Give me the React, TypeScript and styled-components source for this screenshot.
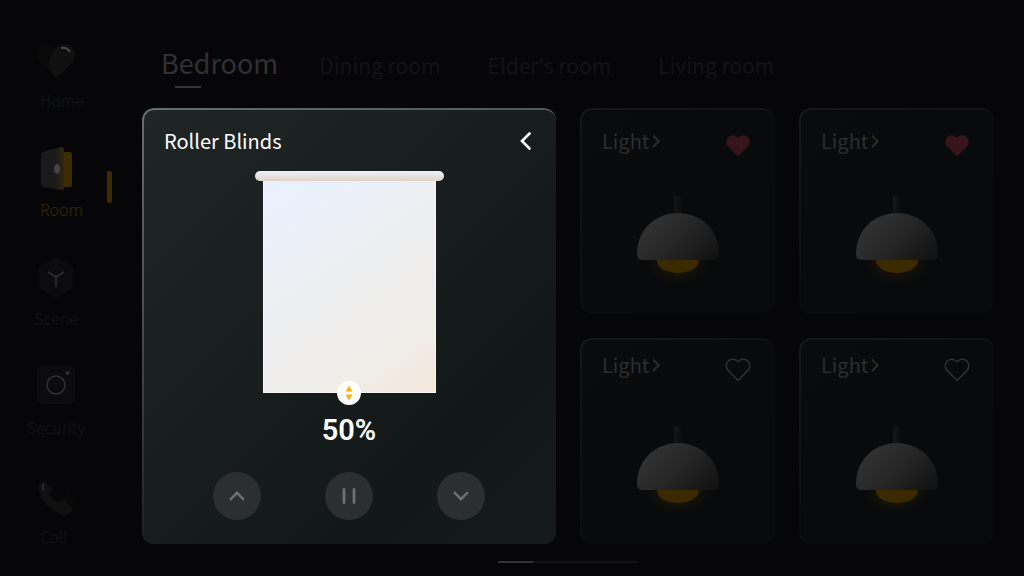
import React from 'react';
import styled, { createGlobalStyle } from 'styled-components';

const GlobalStyle = createGlobalStyle`
  *, *::before, *::after { box-sizing: border-box; }
  body {
    margin: 0;
    background: #060608;
    font-family: "Noto Sans CJK SC", "Noto Sans", sans-serif;
    font-weight: 400;
  }
  button { font: inherit; color: inherit; background: none; border: 0; padding: 0; cursor: pointer; }
  a { color: inherit; text-decoration: none; }
  h2, h3, p { margin: 0; font-weight: 400; }
  svg { display: block; }
`;

const Page = styled.div`
  display: flex;
  min-height: 100vh;
  background: #060608;
`;

const Sidebar = styled.nav`
  flex: 0 0 142px;
  display: flex;
  flex-direction: column;
  gap: 34px;
  padding: 37px 0 16px 40px;
`;

const NavItem = styled.a<{ $active?: boolean; $start?: boolean }>`
  position: relative;
  display: flex;
  flex-direction: column;
  align-items: ${(p) => (p.$start ? 'flex-start' : 'center')};
  gap: 6px;
  width: 32px;
  font-size: 16px;
  line-height: 24px;
  font-weight: 300;
  white-space: nowrap;
  color: ${(p) => (p.$active ? '#3b2a02' : '#151516')};
`;

const NavIcon = styled.svg`
  width: 40px;
  height: 45px;
  margin: 0 -4px;
  flex: none;
`;

const ActiveMark = styled.span`
  position: absolute;
  left: 67px;
  top: 25px;
  width: 5px;
  height: 32px;
  border-radius: 2px;
  background: #3d2b02;
`;

const Main = styled.main`
  flex: 1;
  min-width: 0;
  padding: 43px 30px 12px 0;
`;

const Tabs = styled.div`
  display: flex;
  align-items: baseline;
  gap: 47px;
  height: 65px;
  padding-left: 19px;
  white-space: nowrap;
`;

const Tab = styled.button<{ $active?: boolean }>`
  position: relative;
  margin-right: ${(p) => (p.$active ? -6 : 0)}px;
  font-size: ${(p) => (p.$active ? 27 : 21)}px;
  line-height: 40px;
  color: ${(p) => (p.$active ? '#303031' : '#131314')};
  &::after {
    content: '';
    display: ${(p) => (p.$active ? 'block' : 'none')};
    position: absolute;
    left: 14px;
    top: 43px;
    width: 26px;
    height: 2px;
    background: #343435;
  }
`;

const Board = styled.div`
  display: grid;
  grid-template-columns: repeat(4, minmax(0, 1fr));
  grid-auto-rows: minmax(206px, auto);
  gap: 24px;
`;

const Panel = styled.section`
  position: relative;
  border-radius: 12px;
  &::before {
    content: '';
    position: absolute;
    inset: 0;
    border-radius: inherit;
    padding: 2px 0 0 2px;
    pointer-events: none;
    mask: linear-gradient(#000 0 0) content-box exclude, linear-gradient(#000 0 0);
  }
`;

const BlindsPanel = styled(Panel)`
  grid-column: span 2;
  grid-row: span 2;
  display: flex;
  flex-direction: column;
  align-items: center;
  padding: 19px 22px 24px;
  background: linear-gradient(135deg, #202626 0%, #181d1d 45%, #121818 75%, #151b1b 100%);
  color: #fff;
  &::before {
    background: linear-gradient(160deg, #6a6d6d 0%, #4a4e4e 35%, #1b2020 75%);
  }
`;

const PanelHeader = styled.header`
  display: flex;
  align-items: center;
  justify-content: space-between;
  align-self: stretch;
  height: 28px;
  margin-bottom: 16px;
`;

const PanelTitle = styled.h2`
  font-size: 20px;
  line-height: 28px;
`;

const BackButton = styled.button`
  width: 16px;
  height: 24px;
`;

const Rod = styled.div`
  width: 189px;
  height: 10px;
  border-radius: 5px;
  background: linear-gradient(#edf1fa, #e6e3e2 50%, #dfd2c5);
`;

const Sheet = styled.div`
  position: relative;
  width: 173px;
  height: 212px;
  border: 1px solid #f7f6f3;
  border-top: 0;
  background: linear-gradient(145deg, #e8f1ff 0%, #eeeeef 50%, #f0ede9 75%, #f4e8dc 100%);
`;

const Handle = styled.button`
  position: absolute;
  left: calc(50% - 12px);
  bottom: -13px;
  width: 24px;
  height: 24px;
  border-radius: 50%;
  background: #fff;
`;

const Percent = styled.p`
  margin: 19px 0 24px;
  font-family: Roboto, sans-serif;
  font-size: 29px;
  line-height: 36px;
  font-weight: 600;
`;

const Controls = styled.div`
  display: flex;
  gap: 64px;
`;

const RoundButton = styled.button`
  display: grid;
  place-items: center;
  width: 48px;
  height: 48px;
  border-radius: 50%;
  background: #2b2f30;
`;

const LightCard = styled(Panel)`
  display: flex;
  flex-direction: column;
  align-items: center;
  background: linear-gradient(135deg, #090b0c, #07090a);
  &::before {
    background: linear-gradient(150deg, #171819 0%, #101112 40%, #08090a 80%);
  }
`;

const CardHeader = styled.header<{ $raised: boolean }>`
  display: flex;
  justify-content: space-between;
  align-self: stretch;
  height: 88px;
  padding: ${(p) => (p.$raised ? 13 : 19)}px 24px 0 22px;
`;

const CardTitle = styled.button`
  display: flex;
  align-items: center;
  gap: 3px;
  height: 28px;
  font-size: 20px;
  line-height: 28px;
  color: #2d2d2e;
`;

const LikeButton = styled.button`
  height: 36px;
`;

const Pager = styled.div`
  width: 140px;
  height: 2px;
  margin: 17px auto 0;
  background: #121210;
`;

const PagerThumb = styled.div`
  width: 25%;
  height: 100%;
  background: #323233;
`;

const HomeIcon = () => (
  <NavIcon viewBox="0 -2 40 45" aria-hidden="true">
    <path d="M19 37C11 30 1 25 1 15C1 8 6 5 11 5C16 5 19 9 20 12Z" fill="#090908" />
    <path d="M14 19C16 12 21 5 28 5C34 5 39 9 39 15C39 22 33 27 23 37Q20 39 17 36C13 32 12 26 14 19Z" fill="#101011" />
    <path d="M25 9Q31 8 34 13" fill="none" stroke="#474748" strokeWidth="2" />
  </NavIcon>
);

const RoomIcon = () => (
  <NavIcon viewBox="0 0 40 45" aria-hidden="true">
    <defs>
      <linearGradient id="door" x1="0" x2="1">
        <stop offset="0" stopColor="#1a1a1b" />
        <stop offset="0.6" stopColor="#1a1a1b" />
        <stop offset="1" stopColor="#30260c" />
      </linearGradient>
    </defs>
    <rect x="22" y="6" width="14" height="35" rx="2" fill="#3d2b02" />
    <path d="M7 6L25 1Q28 1 28 4V42Q28 45 25 44L7 41Q5 40 5 38V9Q5 7 7 6Z" fill="url(#door)" />
    <ellipse cx="21" cy="23" rx="3" ry="5" fill="#444445" />
  </NavIcon>
);

const SceneIcon = () => (
  <NavIcon viewBox="0 0 40 45" aria-hidden="true">
    <path d="M18 3Q20 2 22 3L35 11Q37 12 37 14V31Q37 33 35 34L22 42Q20 43 18 42L5 34Q3 33 3 31V14Q3 12 5 11Z" fill="#0c0c0e" />
    <path d="M12 17L20 22L28 17M20 22V32" fill="none" stroke="#303031" strokeWidth="1.5" />
  </NavIcon>
);

const SecurityIcon = () => (
  <NavIcon viewBox="0 2 40 45" aria-hidden="true">
    <rect x="1" y="4" width="38" height="38" rx="5" fill="#0c0c0e" />
    <circle cx="20" cy="23" r="9" fill="none" stroke="#303031" strokeWidth="1.5" />
    <circle cx="31.5" cy="11" r="2" fill="#303031" />
  </NavIcon>
);

const CallIcon = () => (
  <NavIcon viewBox="0 -1 40 45" aria-hidden="true">
    <path d="M22 27L31 19L37 25V33Z" fill="#090907" />
    <path d="M3 12Q4 7 8 6Q11 9 14 12L17 15L13 21Q17 26 22 29L28 26L36 33Q37 36 34 39Q30 42 25 40C12 35 3 25 3 12Z" fill="#101011" />
    <path d="M8 10Q5 13 8 16" fill="none" stroke="#343435" strokeWidth="1.5" />
  </NavIcon>
);

const HeartIcon = ({ filled }: { filled: boolean }) => (
  <svg width="26" height="36" viewBox="0 0 26 36" aria-hidden="true">
    <path
      d="M13 29.5L3.2 19.6A6.3 6.3 0 0 1 12.3 10.2L13 10.8L13.7 10.2A6.3 6.3 0 0 1 22.8 19.6Z"
      fill={filled ? '#37141a' : 'none'}
      stroke={filled ? 'none' : '#303031'}
      strokeWidth="1.5"
      strokeLinejoin="round"
    />
  </svg>
);

const Lamp = ({ id }: { id: string }) => (
  <svg width="106" height="104" viewBox="0 0 106 104" aria-hidden="true">
    <defs>
      <linearGradient id={`${id}-shade`} x1="0.1" y1="0.3" x2="1" y2="0.8">
        <stop offset="0" stopColor="#313132" />
        <stop offset="0.45" stopColor="#262627" />
        <stop offset="1" stopColor="#131314" />
      </linearGradient>
      <linearGradient id={`${id}-stem`} x1="0" x2="1">
        <stop offset="0" stopColor="#161617" />
        <stop offset="1" stopColor="#0a0b0c" />
      </linearGradient>
      <radialGradient id={`${id}-glow`}>
        <stop offset="0.3" stopColor="#3d2b02" stopOpacity="0.3" />
        <stop offset="1" stopColor="#3d2b02" stopOpacity="0" />
      </radialGradient>
    </defs>
    <ellipse cx="53" cy="67" rx="34" ry="22" fill={`url(#${id}-glow)`} />
    <ellipse cx="53" cy="65" rx="21" ry="12" fill="#3b2900" />
    <rect x="49" y="0" width="8" height="18" fill={`url(#${id}-stem)`} />
    <path d="M12 58C12 33 31 17 53 17S94 33 94 58Q94 64 88 64H18Q12 64 12 58Z" fill={`url(#${id}-shade)`} />
  </svg>
);

const NAV = [
  { label: 'Home', icon: HomeIcon, start: true },
  { label: 'Room', icon: RoomIcon, start: true, active: true },
  { label: 'Scene', icon: SceneIcon },
  { label: 'Security', icon: SecurityIcon },
  { label: 'Call', icon: CallIcon, start: true },
];

const TABS = ['Bedroom', 'Dining room', "Elder's room", 'Living room'];

const LIGHTS = [
  { id: 'light-1', liked: true },
  { id: 'light-2', liked: true },
  { id: 'light-3', liked: false },
  { id: 'light-4', liked: false },
];

export default function App() {
  return (
    <>
      <GlobalStyle />
      <Page>
        <Sidebar aria-label="Sections">
          {NAV.map(({ label, icon: Icon, start, active }) => (
            <NavItem key={label} href="#" $active={active} $start={start}>
              <Icon />
              {label}
              {active && <ActiveMark />}
            </NavItem>
          ))}
        </Sidebar>
        <Main>
          <Tabs role="tablist">
            {TABS.map((name, i) => (
              <Tab key={name} role="tab" aria-selected={i === 0} $active={i === 0}>
                {name}
              </Tab>
            ))}
          </Tabs>
          <Board>
            <BlindsPanel>
              <PanelHeader>
                <PanelTitle>Roller Blinds</PanelTitle>
                <BackButton aria-label="Back">
                  <svg width="16" height="24" viewBox="0 0 16 24" fill="none" stroke="#fff" strokeWidth="2.6">
                    <path d="M11.5 4.5L4 12L11.5 19.5" strokeLinecap="round" />
                  </svg>
                </BackButton>
              </PanelHeader>
              <Rod />
              <Sheet>
                <Handle aria-label="Adjust blinds">
                  <svg width="24" height="24" viewBox="0 0 24 24" fill="#fdb10a">
                    <path d="M12 4.5L15.5 10.5H8.5ZM8.5 13.5H15.5L12 19.5Z" />
                  </svg>
                </Handle>
              </Sheet>
              <Percent>50%</Percent>
              <Controls>
                <RoundButton aria-label="Raise">
                  <svg width="24" height="24" viewBox="0 0 24 24" fill="none" stroke="#6e7071" strokeWidth="2.5" strokeLinecap="round">
                    <path d="M5.8 15.2L12 8.8L18.2 15.2" />
                  </svg>
                </RoundButton>
                <RoundButton aria-label="Pause">
                  <svg width="24" height="24" viewBox="0 0 24 24" fill="#6e7071">
                    <rect x="5.6" y="4" width="2.8" height="16" rx="1.4" />
                    <rect x="15.6" y="4" width="2.8" height="16" rx="1.4" />
                  </svg>
                </RoundButton>
                <RoundButton aria-label="Lower">
                  <svg width="24" height="24" viewBox="0 0 24 24" fill="none" stroke="#6e7071" strokeWidth="2.5" strokeLinecap="round">
                    <path d="M5.8 8.8L12 15.2L18.2 8.8" />
                  </svg>
                </RoundButton>
              </Controls>
            </BlindsPanel>
            {LIGHTS.map(({ id, liked }) => (
              <LightCard key={id}>
                <CardHeader $raised={!liked}>
                  <CardTitle>
                    Light
                    <svg width="8" height="28" viewBox="0 0 8 28" fill="none" stroke="#2d2d2e" strokeWidth="1.9">
                      <path d="M1 8.5L6.8 14.3L1 20" />
                    </svg>
                  </CardTitle>
                  <LikeButton aria-label="Favourite" aria-pressed={liked}>
                    <HeartIcon filled={liked} />
                  </LikeButton>
                </CardHeader>
                <Lamp id={id} />
              </LightCard>
            ))}
          </Board>
          <Pager>
            <PagerThumb />
          </Pager>
        </Main>
      </Page>
    </>
  );
}
